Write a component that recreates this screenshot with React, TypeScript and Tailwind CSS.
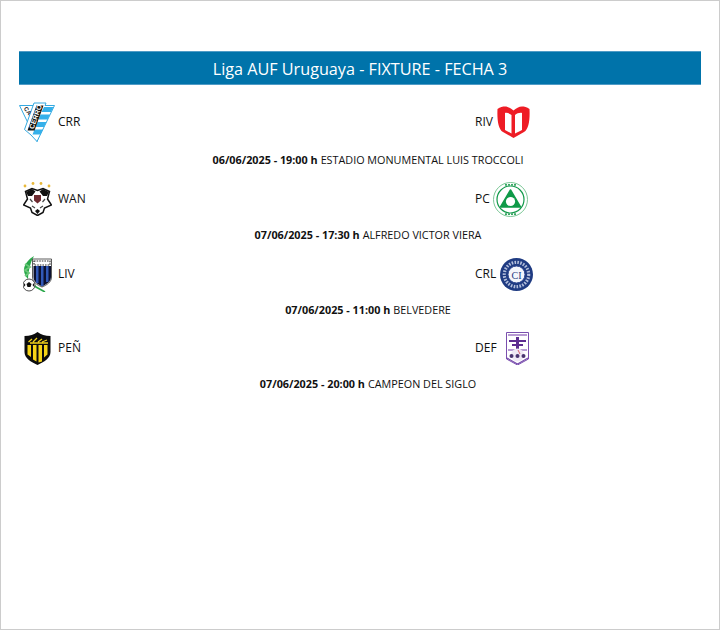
const LogoCerro = () => (
  <svg width="36" height="40" viewBox="0 0 36 40">
    <path d="M0.5 3.5H14L22 27L18 39.5Z" fill="#fff" stroke="#35a9e0" strokeWidth="1" />
    <path d="M15 1H27L26 3.5H35.5L18 39.5L12 33L5.5 27.5Z" fill="#fff" stroke="#35a9e0" strokeWidth="1" />
    <path d="M25 5H34.5L32 10H22.5ZM21.5 12.5H31L28.5 17.5H19.5ZM18.5 20H27.5L25 25H16.5ZM15.5 27.5H24L21.5 32.5H13.5Z" fill="#35b0ea" />
    <path d="M17.5 3.5H24.5L15.5 28.5H8.5Z" fill="#111" />
    <text x="0" y="0" transform="translate(14.5 27.5) rotate(-70)" fontSize="7" fontWeight="700" fill="#fff" fontFamily="'Liberation Sans', sans-serif">CERRO</text>
    <text x="0" y="0" transform="translate(4.5 6.5) rotate(55)" fontSize="6" fontWeight="700" fill="#222" fontFamily="'Liberation Sans', sans-serif">CA</text>
  </svg>
);

const LogoRiver = () => (
  <svg width="33" height="32" viewBox="0 0 33 32">
    <path d="M0.5 3C3 1 6 0.5 8 0.5C11 0.5 14 2.5 16.5 4.5C19 2.5 22 0.5 25 0.5C27 0.5 30 1 32.5 3C33 13 32 23 27 26L16.5 32L6 26C1 23 0 13 0.5 3Z" fill="#ee1c25" />
    <path d="M8 7C10 6.5 12.5 7.5 14.5 9V27.5L8 24ZM18 9C20 7.5 22.5 6.5 25 7V24L18 27.5Z" fill="#fff" />
  </svg>
);

const LogoWanderers = () => (
  <svg width="29" height="34" viewBox="0 0 29 34">
    <g fill="#e9b93a">
      <circle cx="2" cy="4" r="1.4" />
      <circle cx="10" cy="1.5" r="1.4" />
      <circle cx="18" cy="1.5" r="1.4" />
      <circle cx="26" cy="4" r="1.4" />
    </g>
    <path d="M2.5 9.5L9 6.5L14.5 8.5L20 6.5L26.5 9.5L24.5 17L28.5 23L21.5 26L20 30.5L14.5 33.5L9 30.5L7.5 26L0.5 23L4.5 17Z" fill="#fff" stroke="#111" strokeWidth="1.5" />
    <path d="M3 10L9 7L12.5 9.5L9 14L5 14ZM26 10L20 7L16.5 9.5L20 14L24 14ZM12 29L14.5 27L17 29L14.5 32Z" fill="#111" />
    <path d="M11 13H18V18.5L14.5 21.5L11 18.5Z" fill="#6d2a30" />
    <path d="M7 17L9.5 20M22 17L19.5 20M9 24L12 26M20 24L17 26" stroke="#444" strokeWidth="1.2" />
  </svg>
);

const LogoPlaza = () => (
  <svg width="35" height="35" viewBox="0 0 35 35">
    <circle cx="17.5" cy="17.5" r="17" fill="#fff" stroke="#6cc08a" strokeWidth="0.9" />
    <circle cx="17.5" cy="17.5" r="13.5" fill="#fff" stroke="#12994a" strokeWidth="1.2" />
    <path d="M17.5 8L27.5 25H7.5Z" fill="#0f9a48" stroke="#0f9a48" strokeWidth="1.5" strokeLinejoin="round" />
    <circle cx="17.5" cy="19.5" r="4.6" fill="#fff" />
    <path d="M12 2.8H23M12 32.2H23" stroke="#3aa866" strokeWidth="1.8" strokeDasharray="2 1" />
  </svg>
);

const LogoLiverpool = () => (
  <svg width="29" height="36" viewBox="0 0 29 36">
    <path d="M11 0C6 3 1 8 1 14C1 18 3 21 5 23C5 16 7 7 11 0Z" fill="#2aa84a" />
    <path d="M2 8L7 11L2 14L6 17L2 20" stroke="#6cc77a" strokeWidth="1.8" fill="none" />
    <path d="M7 25L13 31L22 36" stroke="#2aa84a" strokeWidth="1.6" fill="none" />
    <path d="M9.5 3H28.5V21C28.5 26 24 29 19 31C14 29 9.5 26 9.5 21Z" fill="#fff" stroke="#333" strokeWidth="0.8" />
    <path d="M11 5H27V9H11Z" fill="#fff" stroke="#333" strokeWidth="1.2" strokeDasharray="1.6 1" />
    <path d="M10.5 10H28V21C28 25.5 24 28 19 30.5C14 28 10.5 25.5 10.5 21Z" fill="#0c1130" />
    <path d="M13 10H15.5V27H13ZM18 10H20.5V30H18ZM23 10H25.5V26H23Z" fill="#3159b8" />
    <circle cx="6" cy="29" r="6" fill="#fff" stroke="#222" strokeWidth="0.8" />
    <path d="M6 26L8.5 28L7.5 31H4.5L3.5 28ZM1 27L2.5 29L0.8 31ZM11 27L9.5 29L11.2 31Z" fill="#111" />
  </svg>
);

const LogoRacing = () => (
  <svg width="33" height="33" viewBox="0 0 33 33">
    <circle cx="16.5" cy="16.5" r="16.5" fill="#1f3b82" />
    <circle cx="16.5" cy="16.5" r="12.2" fill="none" stroke="#b4bfdc" strokeWidth="3.2" strokeDasharray="1.6 1.3" />
    <circle cx="16.5" cy="16.5" r="8.5" fill="#f3f5fb" stroke="#2d4690" strokeWidth="1" />
    <text x="16.5" y="20.5" textAnchor="middle" fontSize="10" fontFamily="'Liberation Serif', serif" fill="#1f3b82">CI</text>
  </svg>
);

const LogoPenarol = () => (
  <svg width="27" height="33" viewBox="0 0 27 33">
    <path d="M0.5 4C6 4 10 2.5 13.5 0C17 2.5 21 4 26.5 4V20C26.5 26 20 30 13.5 33C7 30 0.5 26 0.5 20Z" fill="#0c0c0c" />
    <path d="M4.5 10L8 7M9 10L13 6M14 10L18 7M18 10L23 8M6 11L24 11" stroke="#f2d21b" strokeWidth="1.3" />
    <path d="M3.5 13H7V25L3.5 22.5ZM9 13H12.5V29.5L9 27.5ZM14.5 13H18V29.5L14.5 30.5ZM20 13H23.5V22.5L20 25.5Z" fill="#f6d416" />
  </svg>
);

const LogoDefensor = () => (
  <svg width="23" height="33" viewBox="0 0 23 33">
    <path d="M0.5 0.5H22.5V27L11.5 33L0.5 27Z" fill="#fff" stroke="#7a4fae" strokeWidth="1" />
    <path d="M2 2H21V4H2ZM2 17H21V19H2Z" fill="#b79ad3" />
    <path d="M3 8H20V10H3ZM6 12H17V14H6ZM10 5H13V17H10Z" fill="#5d2d91" />
    <circle cx="11.5" cy="23" r="6.5" fill="#efe9f5" />
    <circle cx="5.5" cy="24" r="2" fill="#4a3470" />
    <circle cx="11.5" cy="24" r="2" fill="#4a3470" />
    <circle cx="17.5" cy="24" r="2" fill="#4a3470" />
    <path d="M12 18L14 22" stroke="#d33a4a" strokeWidth="0.8" />
    <path d="M1 26L11.5 32L22 26" stroke="#7a4fae" strokeWidth="1.2" fill="none" />
  </svg>
);

const matches = [
  { home: "CRR", homeLogo: <LogoCerro />, away: "RIV", awayLogo: <LogoRiver />, date: "06/06/2025 - 19:00 h", place: "ESTADIO MONUMENTAL LUIS TROCCOLI", row: "h-[40px] mt-[17px]", info: "mt-[8px]", gap: "gap-[4px]" },
  { home: "WAN", homeLogo: <LogoWanderers />, away: "PC", awayLogo: <LogoPlaza />, date: "07/06/2025 - 17:30 h", place: "ALFREDO VICTOR VIERA", row: "h-[36px] mt-[11px]", info: "mt-[8px]", gap: "gap-[3px]" },
  { home: "LIV", homeLogo: <LogoLiverpool />, away: "CRL", awayLogo: <LogoRacing />, date: "07/06/2025 - 11:00 h", place: "BELVEDERE", row: "h-[36px] mt-[11px]", info: "mt-[8px]", gap: "gap-[4px]" },
  { home: "PEÑ", homeLogo: <LogoPenarol />, away: "DEF", awayLogo: <LogoDefensor />, date: "07/06/2025 - 20:00 h", place: "CAMPEON DEL SIGLO", row: "h-[36px] mt-[10px]", info: "mt-[8px]", gap: "gap-[9px]" },
];

export default function App() {
  return (
    <div className="h-[630px] w-[720px] bg-white border border-[#cccccc] px-[18px] pt-[50px] text-[12px] text-[#111] font-['Open_Sans',sans-serif]">
      <div className="h-[34px] bg-[#0073aa] border-y border-[#4f9bc6] flex items-center justify-center pt-[2px] text-[16.2px] text-white">
        Liga AUF Uruguaya - FIXTURE - FECHA 3
      </div>
      {matches.map((m) => (
        <div key={m.home}>
          <div className={`flex items-center justify-between ${m.row}`}>
            <div className="flex items-center">
              <div className="w-[39px] flex justify-center pr-[3px]">{m.homeLogo}</div>
              <span>{m.home}</span>
            </div>
            <div className={`w-[226px] flex items-center ${m.gap}`}>
              <span>{m.away}</span>
              {m.awayLogo}
            </div>
          </div>
          <div className={`h-[20px] pl-[16px] flex items-center justify-center text-[10.8px] ${m.info}`}>
            <span className="font-bold mr-[3px]">{m.date}</span>
            <span>{m.place}</span>
          </div>
        </div>
      ))}
    </div>
  );
}
